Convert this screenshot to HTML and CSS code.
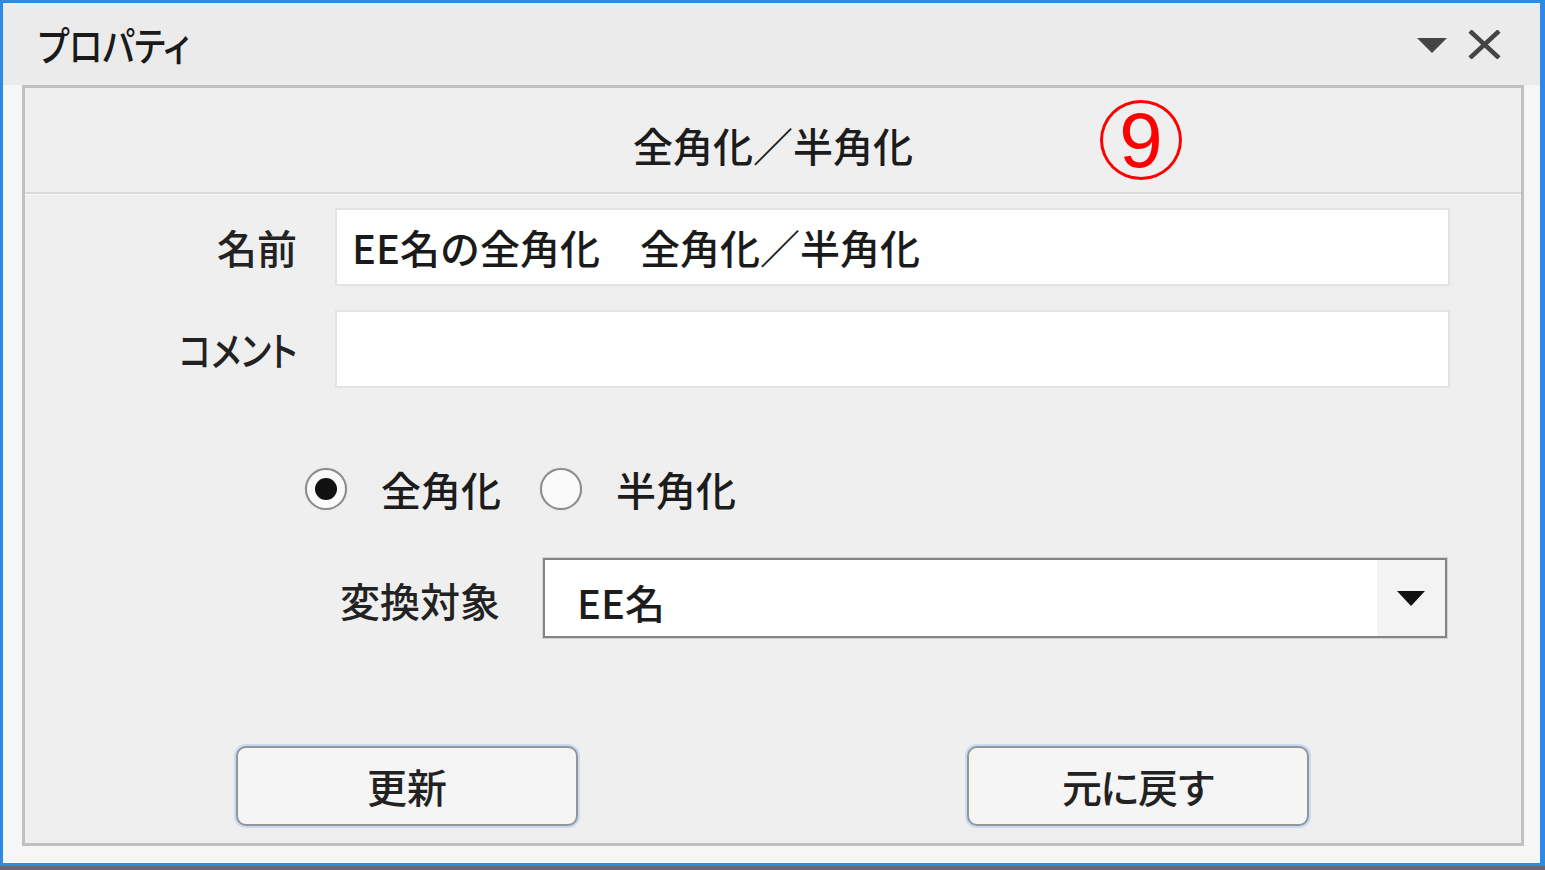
FILE: index.html
```html
<!DOCTYPE html>
<html lang="ja">
<head>
<meta charset="utf-8">
<title>プロパティ</title>
<link rel="stylesheet" href="styles.css">
</head>
<body>
<div class="window">
  <div class="titlebar">
    <span class="title">プロパティ</span>
    <div class="title-icons">
      <svg class="icon-menu" width="30" height="15" viewBox="0 0 30 15"><polygon points="0,0 30,0 15,15" fill="#454545"/></svg>
      <svg class="icon-close" width="33" height="29" viewBox="0 0 33 29"><path d="M2 1 L31 28 M31 1 L2 28" stroke="#454545" stroke-width="4.5" fill="none"/></svg>
    </div>
  </div>
  <div class="content">
    <div class="panel">
      <div class="panel-header">
        <span class="panel-title">全角化／半角化</span>
        <span class="annotation">9</span>
      </div>
      <div class="form">
        <div class="field-row">
          <span class="label">名前</span>
          <div class="textbox">EE名の全角化　全角化／半角化</div>
        </div>
        <div class="field-row comment-row">
          <span class="label"><span class="narrow">コメント</span></span>
          <div class="textbox"></div>
        </div>
        <div class="radio-row">
          <span class="radio checked"><span class="dot"></span></span>
          <span class="radio-label">全角化</span>
          <span class="radio"></span>
          <span class="radio-label">半角化</span>
        </div>
        <div class="combo-row">
          <span class="combo-label">変換対象</span>
          <div class="combo">
            <span class="combo-value">EE名</span>
            <span class="combo-button"><svg width="28" height="15" viewBox="0 0 28 15"><polygon points="0,0 28,0 14,15" fill="#111"/></svg></span>
          </div>
        </div>
        <div class="button-row">
          <div class="btn">更新</div>
          <div class="btn reset">元に戻す</div>
        </div>
      </div>
    </div>
  </div>
</div>
</body>
</html>
```

FILE: styles.css
```css
html, body {
  margin: 0;
  padding: 0;
}
body {
  background: #6a6a6a;
  width: 1545px;
  height: 870px;
  overflow: hidden;
  font-family: "Noto Sans CJK JP", "Noto Sans", sans-serif;
  font-size: 40px;
  font-weight: 500;
  color: #1c1c1c;
}
.window {
  width: 1545px;
  height: 866px;
  box-sizing: border-box;
  border: 3px solid #2a8ae6;
  border-right-width: 5px;
  background: #f6f6f6;
  display: flex;
  flex-direction: column;
}
.titlebar {
  height: 82px;
  flex: none;
  background: #ebebeb;
  display: flex;
  align-items: center;
  justify-content: space-between;
  padding: 0 39px 0 35px;
}
.title {
  display: inline-block;
  line-height: 40px;
  font-feature-settings: "palt";
  transform: scaleX(0.85);
  transform-origin: left center;
  color: #1a1a1a;
}
.title-icons {
  display: flex;
  align-items: center;
  gap: 21px;
}
.icon-menu {
  margin-top: 2px;
}
.content {
  flex: 1;
  display: flex;
  padding: 0 16px 17px 19px;
}
.panel {
  flex: 1;
  border: 3px solid #c0c0c0;
  background: #efefef;
  display: flex;
  flex-direction: column;
}
.panel-header {
  position: relative;
  height: 106px;
  box-sizing: border-box;
  padding-top: 28px;
  text-align: center;
  border-bottom: 2px solid #dadada;
  box-shadow: 0 1px 0 #f8f8f8;
}
.panel-title {
  line-height: 40px;
  display: inline-block;
}
.annotation {
  position: absolute;
  left: 1075px;
  top: 12px;
  width: 82px;
  height: 80px;
  box-sizing: border-box;
  border: 3px solid #ff0000;
  border-radius: 50%;
  color: #ff0000;
  font-family: "Liberation Sans", Arial, sans-serif;
  font-weight: 400;
  font-size: 78px;
  line-height: 74px;
  text-align: center;
}
.form {
  display: flex;
  flex-direction: column;
  padding-top: 14px;
}
.field-row {
  display: grid;
  grid-template-columns: 272px 1fr;
  column-gap: 38px;
  height: 78px;
  padding-right: 71px;
  align-items: center;
}
.comment-row {
  margin-top: 24px;
}
.label {
  text-align: right;
  line-height: 40px;
  color: #222;
}
.narrow {
  display: inline-block;
  font-feature-settings: "palt";
  transform: scaleX(0.85);
  transform-origin: right center;
}
.textbox {
  height: 78px;
  box-sizing: border-box;
  background: #ffffff;
  border: 2px solid #e3e3e3;
  padding-left: 15px;
  line-height: 74px;
  white-space: pre;
  color: #1a1a1a;
}
.radio-row {
  margin-top: 80px;
  height: 42px;
  display: flex;
  align-items: center;
  padding-left: 280px;
}
.radio {
  width: 42px;
  height: 42px;
  box-sizing: border-box;
  border: 2px solid #8c8c8c;
  border-radius: 50%;
  background: #fafafa;
  display: flex;
  align-items: center;
  justify-content: center;
  box-shadow: 0 0 1px #b0b0b0;
}
.dot {
  width: 22px;
  height: 22px;
  border-radius: 50%;
  background: #111;
}
.radio-label {
  line-height: 42px;
  margin-left: 34px;
  margin-right: 39px;
}
.combo-row {
  margin-top: 48px;
  height: 80px;
  display: flex;
  align-items: center;
  padding-left: 315px;
  padding-right: 74px;
}
.combo-label {
  line-height: 40px;
  margin-right: 43px;
  margin-top: 4px;
  color: #222;
}
.combo {
  flex: 1;
  height: 80px;
  box-sizing: border-box;
  border: 2px solid #858585;
  box-shadow: 0 0 0 1px #d2d2d2;
  background: #fff;
  display: flex;
  align-items: stretch;
}
.combo-value {
  flex: 1;
  padding-left: 32px;
  line-height: 80px;
  margin-top: 2px;
}
.combo-button {
  width: 68px;
  background: #f3f3f3;
  display: flex;
  align-items: center;
  justify-content: center;
}
.button-row {
  margin-top: 108px;
  height: 80px;
  display: flex;
  gap: 389px;
  padding-left: 211px;
}
.btn {
  width: 342px;
  height: 80px;
  box-sizing: border-box;
  border: 2px solid #959595;
  border-radius: 10px;
  background: #f5f5f5;
  box-shadow: 0 0 0 2px #c6dcf4;
  text-align: center;
  line-height: 76px;
  color: #222;
}
.reset {
  letter-spacing: -2px;
}
```
